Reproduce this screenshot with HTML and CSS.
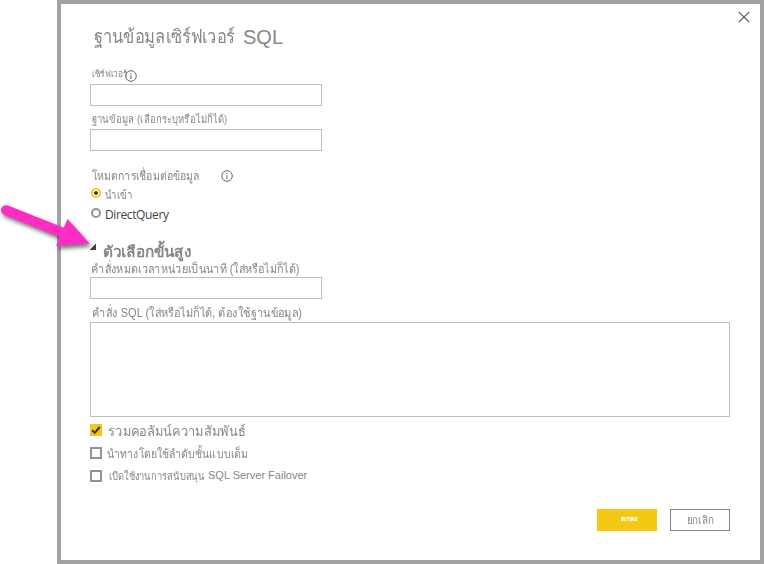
FILE: index.html
```html
<!DOCTYPE html>
<html lang="th">
<head>
<meta charset="utf-8">
<title>ฐานข้อมูลเซิร์ฟเวอร์ SQL</title>
<link rel="stylesheet" href="styles.css">
</head>
<body>
<main class="dialog">
  <h1 class="title"><span class="txt">ฐานข้อมูลเซิร์ฟเวอร์</span> <span>SQL</span></h1>
  <label class="label server"><span class="txt">เซิร์ฟเวอร์</span><svg class="info" viewBox="0 0 12 12"><circle cx="6" cy="6" r="5.3"/><path d="M6 5.2V9M6 3v1.2"/></svg></label>
  <input class="field" type="text">
  <label class="label database"><span class="txt">ฐานข้อมูล (เลือกระบุหรือไม่ก็ได้)</span></label>
  <input class="field" type="text">
  <div class="label mode"><span class="txt">โหมดการเชื่อมต่อข้อมูล</span><svg class="info" viewBox="0 0 12 12"><circle cx="6" cy="6" r="5.3"/><path d="M6 5.2V9M6 3v1.2"/></svg></div>
  <label class="radio import"><i class="dot on"></i><span class="txt">นำเข้า</span></label>
  <label class="radio direct"><i class="dot"></i><span class="txt">DirectQuery</span></label>
  <h2 class="advanced"><i class="caret"></i><span class="txt">ตัวเลือกขั้นสูง</span></h2>
  <label class="label timeout"><span class="txt">คำสั่งหมดเวลาหน่วยเป็นนาที (ใส่หรือไม่ก็ได้)</span></label>
  <input class="field" type="text">
  <label class="label sql"><span class="txt">คำสั่ง SQL (ใส่หรือไม่ก็ได้, ต้องใช้ฐานข้อมูล)</span></label>
  <textarea class="field area"></textarea>
  <label class="check relation"><i class="box on"><svg viewBox="0 0 12 12"><path d="M2.2 6.2 4.8 8.8 9.8 3"/></svg></i><span class="txt">รวมคอลัมน์ความสัมพันธ์</span></label>
  <label class="check hierarchy"><i class="box"></i><span class="txt">นำทางโดยใช้ลำดับชั้นแบบเต็ม</span></label>
  <label class="check failover"><i class="box"></i><span class="txt">เปิดใช้งานการสนับสนุน</span> <span class="latin">SQL Server Failover</span></label>
  <footer class="actions">
    <button class="btn primary"><span class="txt">ตกลง</span></button>
    <button class="btn cancel"><span class="txt">ยกเลิก</span></button>
  </footer>
  <svg class="close" viewBox="0 0 12 12"><path d="M.8.8l10.4 10.4M11.2.8.8 11.2"/></svg>
</main>
<svg class="arrow" viewBox="0 0 110 80"><path d="M67.500 29 89.500 53.500 56 56Z"/><path class="shaft" d="M6 20.200 62 42.500"/></svg>
</body>
</html>
```
FILE: styles.css
```css
* { box-sizing: border-box; }
body {
  margin: 0;
  background: #fff;
  color: #8b8589;
  font: 12px/16px "Liberation Sans", sans-serif;
}
.dialog {
  position: relative;
  width: 707px;
  height: 564px;
  margin-left: 57px;
  padding: 18px 30px 0 29px;
  border: 4px solid #a2a2a2;
}
.txt { white-space: nowrap; transform-origin: 0 50%; }
.title { display: flex; height: 30px; margin: 0 0 14px 4px; font-size: 20px; line-height: 30px; font-weight: 400; }
.title .txt { width: 149px; font-size: 19px; transform: scaleX(.865); }
.label { display: flex; align-items: center; padding-left: 2px; }
.server { height: 18px; font-size: 9px; }
.server .txt { width: 33px; margin-top: -2px; transform: scaleX(.93); }
.info { flex: none; width: 12px; height: 12px; fill: none; stroke: #666; stroke-width: 1; }
.server .info { margin-top: 1px; }
.database { height: 23px; padding-top: 2px; font-size: 11px; }
.database .txt { transform: scaleX(.865); }
.field { display: block; width: 232px; height: 22px; margin: 0; padding: 2px; border: 1px solid #bfbfbf; background: #fff; }
.mode { height: 20px; margin-top: 14px; padding-top: 1px; }
.mode .txt { width: 129px; transform: scaleX(.877); }
.radio { display: flex; align-items: center; height: 19px; }
.import .txt { transform: scaleX(.8); }
.dot { width: 10px; height: 10px; margin: -4px 4px 0 1px; border: 2px solid #939393; border-radius: 50%; }
.dot.on { border-color: #f2c811; background: radial-gradient(#333 0 1.5px, #fff 2.2px); }
.direct { height: 20px; }
.direct .dot { margin-top: -3px; }
.direct .txt { color: #444; font: 12px "Open Sans", sans-serif; letter-spacing: -.38px; }
.advanced { display: flex; align-items: center; height: 20px; margin: 17px 0 0; font-size: 15px; font-weight: 700; }
.advanced .txt { padding-top: 2px; transform: scaleX(1.02); }
.caret { width: 6px; height: 6px; margin: -8px 7px 0 0; background: linear-gradient(135deg, transparent 50%, #444 50%); }
.timeout { height: 16px; padding-left: 1px; }
.timeout .txt { transform: scaleX(.905); }
.sql { height: 23px; padding-top: 4px; }
.sql .txt { transform: scaleX(.917); }
.area { width: 640px; height: 95px; resize: none; }
.check { display: flex; align-items: center; height: 23px; }
.relation { margin-top: 2px; }
.box { width: 12px; height: 12px; flex: none; margin: -2px 6px 0 0; border: 2px solid #939393; }
.box.on { border: 0; background: #f2c811; }
.box svg { display: block; fill: none; stroke: #333; stroke-width: 2; }
.relation .txt { padding-top: 1px; font-size: 14px; transform: scaleX(.92); }
.hierarchy .box { margin-right: 5px; }
.hierarchy .txt { transform: scaleX(.876); }
.failover { font-size: 11px; }
.failover .box { margin-right: 7px; }
.failover .txt { width: 99px; margin-top: -2px; transform: scaleX(.85); }
.latin { margin-top: -3px; }
.actions { display: flex; justify-content: flex-end; gap: 13px; margin-top: 21px; }
.btn { display: flex; align-items: center; justify-content: center; width: 60px; height: 22px; padding: 0; border: 1px solid #8b8589; background: #fff; color: #8b8589; font: 11px "Liberation Sans", sans-serif; }
.btn .txt { transform-origin: 50% 50%; }
.cancel .txt { transform: scaleX(.9); }
.primary { border: 0; background: #f2c811; color: #fff; font-size: 7px; font-weight: 700; }
.primary .txt { padding: 0 0 4px 4px; }
.close { position: absolute; top: 7px; right: 10px; width: 12px; height: 12px; stroke: #555; stroke-width: 1.2; }
.arrow { position: absolute; left: 0; top: 190px; width: 110px; height: 80px; fill: #ff2cc4; filter: drop-shadow(2px 3px 2px rgba(0, 0, 0, .55)); }
.shaft { stroke: #ff2cc4; stroke-width: 10; stroke-linecap: round; }
```
